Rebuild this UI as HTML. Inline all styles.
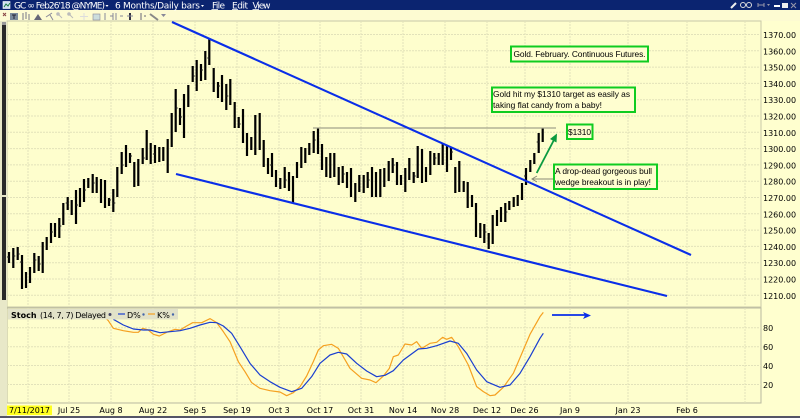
<!DOCTYPE html>
<html><head><meta charset="utf-8"><style>
html,body{margin:0;padding:0;background:#ffffcf;width:800px;height:418px;overflow:hidden}
svg{display:block;filter:blur(.3px)}
text{font-family:"DejaVu Sans",sans-serif;font-size:8px;fill:#000}
.a{font-family:"Liberation Sans",sans-serif;font-size:8.4px;fill:#000}
.t{fill:#fff;font-size:9px}
</style></head><body>
<svg width="800" height="418" viewBox="0 0 800 418" xmlns="http://www.w3.org/2000/svg">
<rect width="800" height="418" fill="#ffffcf"/>
<rect width="800" height="10" fill="#0b2470"/>
<rect y="10" width="800" height="11" fill="#fdfbd2"/>
<rect x="7" y="21" width="754" height="286" fill="#fefecd" stroke="#c8c8a8" stroke-width="1"/>
<rect x="7" y="308" width="754" height="95" fill="#fefecd" stroke="#b8b8a0" stroke-width="1"/>
<rect x="0" y="21" width="7" height="395" fill="#e8e8c8"/>
<rect x="2" y="25" width="4" height="170" fill="#2a2a2a"/>
<rect x="2" y="197" width="4" height="103" fill="#2a2a2a"/>
<rect x="2" y="22" width="4" height="3" fill="#999"/>
<rect y="416" width="800" height="2" fill="#556"/>
<!-- grid -->
<g stroke="#e2e2ba" stroke-width="1" stroke-dasharray="2 1" fill="none">
<path d="M28 21V307M69 21V307M111 21V307M153 21V307M195 21V307M237 21V307M279 21V307M320 21V307M361 21V307M403 21V307M445 21V307M487 21V307M525 21V307M570 21V307M628 21V307M687 21V307M745 21V307"/>
<path d="M7 34.5H761M7 50.8H761M7 67.1H761M7 83.4H761M7 99.7H761M7 116H761M7 132.3H761M7 148.6H761M7 164.9H761M7 181.2H761M7 197.5H761M7 213.8H761M7 230.1H761M7 246.4H761M7 262.7H761M7 279H761M7 295.3H761"/>
<path d="M28 308V403M69 308V403M111 308V403M153 308V403M195 308V403M237 308V403M279 308V403M320 308V403M361 308V403M403 308V403M445 308V403M487 308V403M525 308V403M570 308V403M628 308V403M687 308V403M745 308V403"/>
<path d="M7 327.7H761M7 346.7H761M7 365.5H761M7 384.5H761"/>
</g>
<!-- price bars -->
<path stroke="#000" stroke-width="2.2" fill="none" d="M9 252V263M13.3 248V268M17.7 247V260M22 255V289M26 272V288M30 267V283M34.3 253V273M38.7 256V271M42.7 242V273M46.7 237V250M51 223V243M55 223V237M59.3 218V238M63.3 203V225M67.7 197V210M71.7 200V215M76 190V224M80 188V207M84 179V202M88.3 178V188M92.7 174V193M96.7 177V193M101 179V203M105 180V208M109 198V206M113.3 189V212M117.3 167V197M121.7 152V174M126 145V167M130 153V163M134.3 162V187M138.3 159V186M142.7 148V164M146.7 130V160M150.7 143V164M155 145V163M159.3 147V162M163.3 147V161M167.7 139V173M171.7 113V147M175.7 89V132M180 108V125M184 94V138M188.3 85V107M192.7 66V82M196.7 60V91M201 64V81M205.3 51V80M209.3 38V65M213.7 68V92M218 82V98M222 75V102M226.3 84V110M230.3 79V105M234.7 102V128M238.7 117V128M243 109V143M247 133V156M251.3 137V150M255.3 115V155M259.7 113V150M263.7 140V167M268 158V174M272 153V177M276 170V187M280.3 178V189M284.7 167V188M289 172V191M293 176V203M297 162V178M301.3 147V168M305.3 148V163M309.3 143V155M313.7 131V153M318 128V154M322 144V170M326.3 157V177M330.3 153V178M334.3 153V177M338.7 167V185M342.7 166V183M347 172V188M351 168V197M355.3 183V202M359.3 175V192M363.7 175V193M367.7 172V188M372 167V197M376 172V197M380.3 169V197M384.3 168V187M388.7 161V181M392.7 158V173M397 162V185M401 175V185M405.3 168V192M409.3 158V180M413.7 172V183M417.7 146V178M422 149V183M426 167V182M430.3 151V175M434.3 153V165M438.7 153V165M442.7 143V165M447 146V172M451 148V160M455.3 167V193M459.3 161V192M463.7 181V192M467.7 182V208M472 195V207M476 203V237M480.3 223V238M484.3 224V243M488.7 233V249M492.7 215V244M497 210V226M501 207V222M505.3 203V222M509.3 201V210M513.7 197V207M517.7 195V206M522 183V200M526 168V185M530.3 160V172M534.3 153V164M538.7 133V153M542.7 128V142"/>
<path stroke="#222" stroke-width="1" fill="none" d="M9 257h-2M13.3 256h2M17.7 254h2M22 262h-2M34.3 260h2M38.7 264h2M51 232h2M59.3 226h2M67.7 203h-2M76 205h2M84 190h2M92.7 183h2M109 200h2M113.3 203h2M121.7 165h2M130 156h2M142.7 158h2M155 154h-2M175.7 108h2M180 117h2M192.7 76h2M201 70h2M209.3 58h-2M218 86h2M226.3 96h2M238.7 124h2M272 165h-2M284.7 180h2M313.7 140h2M342.7 174h2M367.7 180h2M392.7 165h2M413.7 176h2M434.3 158h2M451 152h2M484.3 232h2M505.3 212h2M526 176h-2M538.7 142h-2"/>
<!-- lines -->
<path d="M313 128H556" stroke="#a3a38c" stroke-width="1.2" fill="none"/>
<path d="M172 22L691 255M176 174L667 296" stroke="#0a2ee8" stroke-width="2.1" fill="none"/>
<path d="M536.7 173L555.5 137" stroke="#0a9a40" stroke-width="1.8" fill="none"/>
<path d="M557 133.5L556.5 142.5L550 139Z" fill="#0a9a40"/>
<path d="M553 179H532M537 176L532 179L537 182" stroke="#8a8a78" stroke-width="1" fill="none"/>
<path d="M552 315H587" stroke="#0a2ee8" stroke-width="1.8" fill="none"/>
<path d="M591 315.5L583 312L585 315.5L583 319Z" fill="#0a2ee8"/>
<!-- stoch curves (drawn in 3x coordinates) -->
<g fill="none" stroke-linejoin="round" transform="translate(0,300) scale(.33333)" stroke-width="3.6">
<path stroke="#f5a020" d="M280 48L310 48L325 62L340 85L370 92L400 97L415 97L428 85L445 90L460 103L478 108L500 97L525 88L540 90L560 78L578 68L605 68L630 56L650 68L670 95L690 125L715 185L735 215L755 248L780 265L810 272L840 276L860 287L880 278L900 260L920 228L940 185L955 150L970 137L995 133L1015 145L1050 205L1085 235L1110 240L1128 248L1150 228L1168 205L1180 170L1195 165L1215 132L1235 135L1250 125L1265 145L1290 130L1310 127L1328 112L1340 118L1355 112L1375 140L1405 195L1430 260L1450 275L1470 287L1485 285L1510 262L1540 220L1570 150L1590 103L1620 50L1630 37"/>
<path stroke="#1a3fd0" d="M340 58L370 75L400 87L430 90L450 90L480 98L510 95L540 92L570 85L600 75L630 67L650 68L670 78L695 100L720 140L750 190L780 225L810 245L840 262L875 275L905 265L935 230L960 190L990 165L1015 157L1040 162L1070 190L1100 213L1130 230L1155 226L1180 212L1210 180L1255 147L1280 145L1310 137L1350 123L1375 130L1400 160L1430 210L1460 245L1500 262L1530 255L1560 220L1590 170L1620 115L1630 100"/>
</g>
<!-- annotation boxes -->
<g fill="#fffed0" stroke="#0fcc20" stroke-width="2">
<rect x="511" y="46.500" width="137" height="15"/>
<rect x="492" y="87.500" width="143" height="24.500"/>
<rect x="567" y="124.500" width="25.500" height="14.500"/>
<rect x="554" y="164.500" width="103" height="24.500"/>
</g>
<text class="a" x="513.500" y="57" textLength="132" lengthAdjust="spacing">Gold. February. Continuous Futures.</text>
<text class="a" x="493" y="97" textLength="137" lengthAdjust="spacing">Gold hit my $1310 target as easily as</text>
<text class="a" x="493" y="108" textLength="109" lengthAdjust="spacing">taking flat candy from a baby!</text>
<text class="a" x="568" y="135" textLength="23" lengthAdjust="spacing">$1310</text>
<text class="a" x="555" y="174" textLength="97" lengthAdjust="spacing">A drop-dead gorgeous bull</text>
<text class="a" x="555" y="185" textLength="96" lengthAdjust="spacing">wedge breakout is in play!</text>
<!-- y axis -->
<g>
<text x="763" y="38">1370.00</text><text x="763" y="54.300">1360.00</text><text x="763" y="70.600">1350.00</text><text x="763" y="86.900">1340.00</text><text x="763" y="103.200">1330.00</text><text x="763" y="119.500">1320.00</text><text x="763" y="135.800">1310.00</text><text x="763" y="152.100">1300.00</text><text x="763" y="168.400">1290.00</text><text x="763" y="184.700">1280.00</text><text x="763" y="201">1270.00</text><text x="763" y="217.300">1260.00</text><text x="763" y="233.600">1250.00</text><text x="763" y="249.900">1240.00</text><text x="763" y="266.200">1230.00</text><text x="763" y="282.500">1220.00</text><text x="763" y="298.800">1210.00</text>
<text x="763" y="331">80</text><text x="763" y="350">60</text><text x="763" y="369">40</text><text x="763" y="388">20</text>
</g>
<!-- stoch header -->
<rect x="8" y="309" width="170" height="10.500" fill="#e2e2c8"/>
<text x="11" y="318" font-weight="bold">Stoch</text>
<text x="40" y="318" textLength="66" lengthAdjust="spacing">(14, 7, 7) Delayed</text>
<circle cx="110" cy="314.500" r="1.500" fill="#446"/>
<path d="M118 314H125" stroke="#1a3fd0" stroke-width="1.200"/>
<text x="127" y="318">D%</text>
<circle cx="143.500" cy="314.500" r="1.200" fill="#46a"/>
<path d="M148 314H155" stroke="#f5a020" stroke-width="1.200"/>
<text x="157" y="318">K%</text>
<circle cx="173" cy="314.500" r="1.200" fill="#46a"/>
<!-- x axis -->
<rect x="7" y="405.500" width="45" height="9.500" fill="#ffff20"/>
<text x="9" y="413">7/11/2017</text>
<g text-anchor="middle">
<text x="69" y="413">Jul 25</text><text x="111" y="413">Aug 8</text><text x="153" y="413">Aug 22</text><text x="195" y="413">Sep 5</text><text x="237" y="413">Sep 19</text><text x="279" y="413">Oct 3</text><text x="320" y="413">Oct 17</text><text x="361" y="413">Oct 31</text><text x="403" y="413">Nov 14</text><text x="445" y="413">Nov 28</text><text x="487" y="413">Dec 12</text><text x="524.500" y="413">Dec 26</text><text x="570" y="413">Jan 9</text><text x="628" y="413">Jan 23</text><text x="687" y="413">Feb 6</text>
</g>
<!-- title bar -->
<rect x="3" y="1.500" width="7" height="7" fill="#cfe0f0" stroke="#fff" stroke-width=".6"/>
<path d="M4 7L6 4L8 6L10 3" stroke="#1a7a40" stroke-width="1" fill="none"/>
<text class="t" x="14" y="8.500" textLength="91" lengthAdjust="spacing">GC ∞ Feb26'18 @NYME)</text>
<path d="M105.500 5h3l-1.500 2z" fill="#fff"/>
<text class="t" x="115" y="8.500" textLength="85" lengthAdjust="spacing">6 Months/Daily bars</text>
<path d="M201 5h3l-1.500 2z" fill="#fff"/>
<text class="t" x="212" y="8.500" textLength="13" lengthAdjust="spacing">File</text>
<text class="t" x="232" y="8.500" textLength="16" lengthAdjust="spacing">Edit</text>
<text class="t" x="252.500" y="8.500" textLength="18" lengthAdjust="spacing">View</text>
<path d="M211.500 9.500H218M232 9.500H238M252.500 9.500H259" stroke="#fff" stroke-width=".7"/>
<path d="M731 8L736 3" stroke="#eee" stroke-width="2"/>
<circle cx="743" cy="5" r="2.500" fill="none" stroke="#ddd"/><circle cx="749" cy="5" r="2.500" fill="none" stroke="#ddd"/>
<path d="M758 5H764M758 3V7M764 3V7" stroke="#99a" stroke-width="1"/>
<path d="M767 4h3l-1.500 2z" fill="#99a"/>
<rect x="774" y="5" width="6" height="2" fill="#fff"/>
<rect x="782" y="3" width="6" height="5" fill="#eee"/>
<path d="M791 3L796 8M796 3L791 8" stroke="#99a" stroke-width="1"/>
<!-- toolbar -->
<path d="M3 13L6 16M6 13L3 16" stroke="#844" stroke-width="1"/>
<rect x="10" y="13" width="8" height="7" fill="#7a8a9a"/><path d="M12 15h4M14 15v4" stroke="#223" stroke-width="1"/>
<path d="M23 13V20M26 12V19M29 14V20" stroke="#778" stroke-width="1"/>
<path d="M34 20L38 14L42 20Z" fill="#667"/>
<path d="M46 17L52 13M50 15L53 20" stroke="#889" stroke-width="1" fill="none"/>
<circle cx="58" cy="14" r="1.800" fill="#bbb"/><path d="M59 15L62 18" stroke="#bbb"/>
<circle cx="69" cy="14" r="1.800" fill="#bbb"/><path d="M70 15L73 18" stroke="#bbb"/>
<path d="M84 13V20M80 16.500H88" stroke="#ddd" stroke-width="1"/>
<rect x="93" y="14" width="7" height="6" fill="#cdd" stroke="#889" stroke-width=".6"/>
<path d="M105 13V20M110 16H113M113 13V20" stroke="#889" stroke-width="1"/>
<path d="M116 13V20M120 16H123" stroke="#889" stroke-width="1"/>
<path d="M130 13V20" stroke="#334" stroke-width="2"/>
<path d="M127 16h6" stroke="#889"/>
<path d="M141 13V20M144 16h2" stroke="#667" stroke-width="1"/>
<path d="M150 14L158 20" stroke="#888" stroke-width="2"/>
<path d="M161 14h5l-2.500 3z" fill="#889"/>
</svg>
</body></html>
